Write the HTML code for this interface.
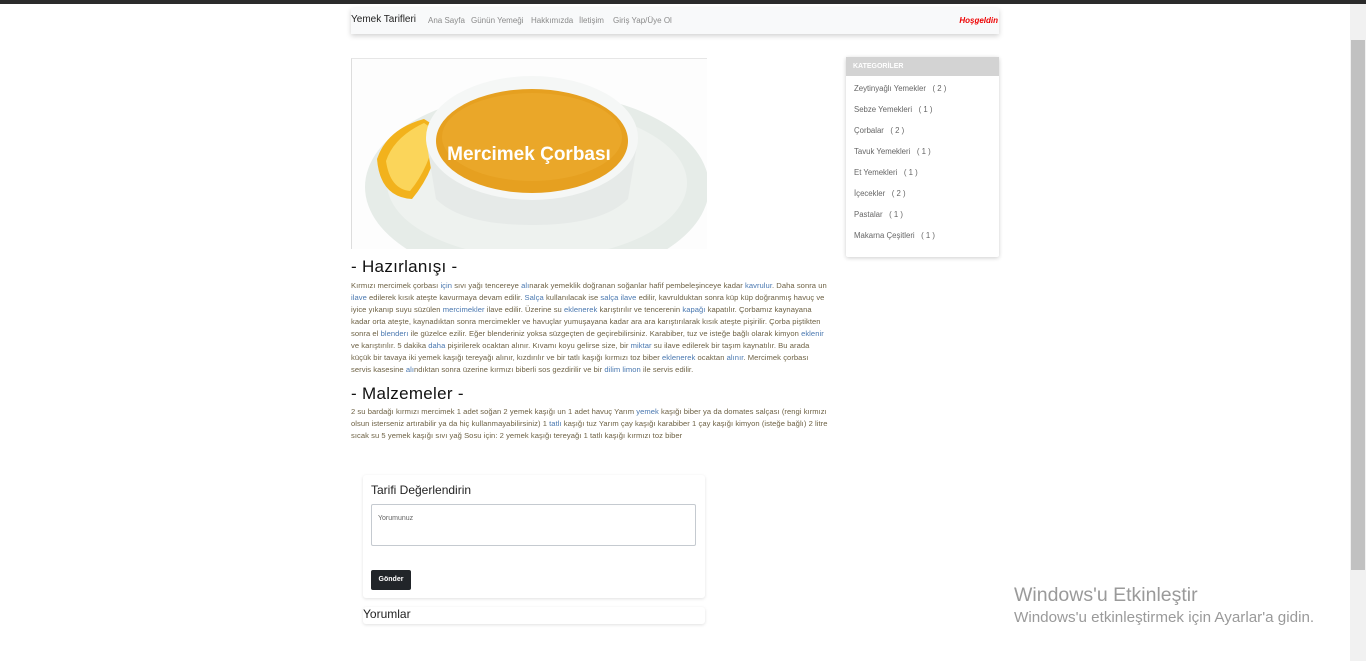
<!DOCTYPE html>
<html><head><meta charset="utf-8"><style>
*{box-sizing:border-box;margin:0;padding:0}
body{width:1366px;height:661px;overflow:hidden;background:#fff;font-family:"Liberation Sans",sans-serif;position:relative}
.topbar{position:absolute;left:0;top:0;width:1366px;height:4px;background:#2b2b2b}
.sb{position:absolute;right:0;top:4px;width:16px;height:657px;background:#f1f1f1}
.sb .th{position:absolute;left:1px;top:36px;width:14px;height:530px;background:#c1c1c1}
.nav{position:absolute;left:351px;top:8px;width:648px;height:26px;background:#f8f9fa;box-shadow:0 2px 5px rgba(0,0,0,.18)}
.nav .br{position:absolute;left:0;top:6px;font-size:10px;color:#222}
.nav .l{position:absolute;top:8px;font-size:8px;color:#8a8a8a}
.nav .h{position:absolute;right:1px;top:8px;font-size:8px;color:#e00;font-style:italic;font-weight:bold}
.img{position:absolute;left:351px;top:58px;width:356px;height:191px;border-left:1px solid #ddd;border-top:1px solid #e6e6e6;overflow:hidden;background:#fff}
h2{position:absolute;font-size:17px;font-weight:normal;color:#111;letter-spacing:.3px}
.p{position:absolute;left:351px;width:478px;font-size:7.6px;line-height:12px;color:#6e6245;letter-spacing:.05px}
.p b{font-weight:normal;color:#4a78b0}
.cat{position:absolute;left:846px;top:57px;width:153px;height:200px;background:#fff;box-shadow:0 1px 4px rgba(0,0,0,.2);border-radius:2px}
.cat .hd{height:19px;background:#d3d3d3;color:#fff;font-size:7px;font-weight:bold;padding:6px 7px}
.cat div.i{font-size:7.8px;color:#666;height:21px;padding-left:8px;padding-top:8px}
.card{position:absolute;left:363px;top:475px;width:342px;height:123px;background:#fff;box-shadow:0 1px 3px rgba(0,0,0,.12);border-radius:3px}
.card .t{position:absolute;left:8px;top:8px;font-size:12px;color:#222}
.card .ta{position:absolute;left:8px;top:29px;width:325px;height:42px;border:1px solid #c5cad0;border-radius:2px;font-size:7px;color:#666;padding:10px 6px}
.card .bt{position:absolute;left:8px;top:95px;width:40px;height:20px;background:#212529;color:#fff;font-size:7px;font-weight:bold;border-radius:2px;text-align:center;line-height:20px}
.card2{position:absolute;left:363px;top:607px;width:342px;height:17px;background:#fff;box-shadow:0 1px 3px rgba(0,0,0,.12);border-radius:3px;font-size:12px;color:#222}
.win{position:absolute;left:1014px;color:#9a9a9a;white-space:nowrap}
</style></head><body>
<div class="topbar"></div>
<div class="sb"><div class="th"></div></div>
<div class="nav">
<span class="br">Yemek Tarifleri</span>
<span class="l" style="left:77px">Ana Sayfa</span>
<span class="l" style="left:120px">Günün Yemeği</span>
<span class="l" style="left:180px">Hakkımızda</span>
<span class="l" style="left:228px">İletişim</span>
<span class="l" style="left:262px">Giriş Yap/Üye Ol</span>
<span class="h">Hoşgeldin</span>
</div>
<div class="img"><svg width="356" height="191" viewBox="0 0 356 191">
<rect width="356" height="191" fill="#fdfdfd"/>
<ellipse cx="185" cy="128" rx="172" ry="95" fill="#e6ece8"/>
<ellipse cx="185" cy="124" rx="150" ry="75" fill="#eef2ef"/>
<path d="M72 60 Q35 70 25 100 Q28 138 60 140 Q85 110 88 70Z" fill="#f2b21c"/>
<path d="M72 64 Q42 78 34 102 Q38 130 58 132 Q78 108 84 72Z" fill="#fbd55a"/>
<path d="M74 80 L84 140 Q110 166 180 166 Q250 166 276 140 L286 80Z" fill="#e6eae8"/>
<ellipse cx="180" cy="79" rx="106" ry="62" fill="#f5f7f6"/>
<ellipse cx="180" cy="82" rx="96" ry="52" fill="#e6a020"/>
<ellipse cx="180" cy="78" rx="90" ry="44" fill="#eaa729"/>
<text x="177" y="101" text-anchor="middle" font-family="Liberation Sans" font-weight="bold" font-size="19" fill="#fff">Mercimek Çorbası</text>
</svg></div>
<h2 style="left:351px;top:257px">- Hazırlanışı -</h2>
<div class="p" style="top:280px">Kırmızı mercimek çorbası <b>için</b> sıvı yağı tencereye <b>alı</b>narak yemeklik doğranan soğanlar hafif pembeleşinceye kadar <b>kavrulur</b>. Daha sonra un <b>ilave</b> edilerek kısık ateşte kavurmaya devam edilir. <b>Salça</b> kullanılacak ise <b>salça ilave</b> edilir, kavrulduktan sonra küp küp doğranmış havuç ve iyice yıkanıp suyu süzülen <b>mercimekler</b> ilave edilir. Üzerine su <b>eklenerek</b> karıştırılır ve tencerenin <b>kapağı</b> kapatılır. Çorbamız kaynayana kadar orta ateşte, kaynadıktan sonra mercimekler ve havuçlar yumuşayana kadar ara ara karıştırılarak kısık ateşte pişirilir. Çorba piştikten sonra el <b>blenderı</b> ile güzelce ezilir. Eğer blenderiniz yoksa süzgeçten de geçirebilirsiniz. Karabiber, tuz ve isteğe bağlı olarak kimyon <b>eklenir</b> ve karıştırılır. 5 dakika <b>daha</b> pişirilerek ocaktan alınır. Kıvamı koyu gelirse size, bir <b>miktar</b> su ilave edilerek bir taşım kaynatılır. Bu arada küçük bir tavaya iki yemek kaşığı tereyağı alınır, kızdırılır ve bir tatlı kaşığı kırmızı toz biber <b>eklenerek</b> ocaktan <b>alınır</b>. Mercimek çorbası servis kasesine <b>alı</b>ndıktan sonra üzerine kırmızı biberli sos gezdirilir ve bir <b>dilim limon</b> ile servis edilir.</div>
<h2 style="left:351px;top:384px">- Malzemeler -</h2>
<div class="p" style="top:406px">2 su bardağı kırmızı mercimek 1 adet soğan 2 yemek kaşığı un 1 adet havuç Yarım <b>yemek</b> kaşığı biber ya da domates salçası (rengi kırmızı olsun isterseniz artırabilir ya da hiç kullanmayabilirsiniz) 1 <b>tatlı</b> kaşığı tuz Yarım çay kaşığı karabiber 1 çay kaşığı kimyon (isteğe bağlı) 2 litre sıcak su 5 yemek kaşığı sıvı yağ Sosu için: 2 yemek kaşığı tereyağı 1 tatlı kaşığı kırmızı toz biber</div>
<div class="cat"><div class="hd">KATEGORİLER</div>
<div class="i">Zeytinyağlı Yemekler &nbsp;&nbsp;( 2 )</div>
<div class="i">Sebze Yemekleri &nbsp;&nbsp;( 1 )</div>
<div class="i">Çorbalar &nbsp;&nbsp;( 2 )</div>
<div class="i">Tavuk Yemekleri &nbsp;&nbsp;( 1 )</div>
<div class="i">Et Yemekleri &nbsp;&nbsp;( 1 )</div>
<div class="i">İçecekler &nbsp;&nbsp;( 2 )</div>
<div class="i">Pastalar &nbsp;&nbsp;( 1 )</div>
<div class="i">Makarna Çeşitleri &nbsp;&nbsp;( 1 )</div>
</div>
<div class="card"><div class="t">Tarifi Değerlendirin</div><div class="ta">Yorumunuz</div><div class="bt">Gönder</div></div>
<div class="card2">Yorumlar</div>
<div class="win" style="top:584px;font-size:19.5px">Windows'u Etkinleştir</div>
<div class="win" style="top:609px;font-size:15.2px">Windows'u etkinleştirmek için Ayarlar'a gidin.</div>
</body></html>
